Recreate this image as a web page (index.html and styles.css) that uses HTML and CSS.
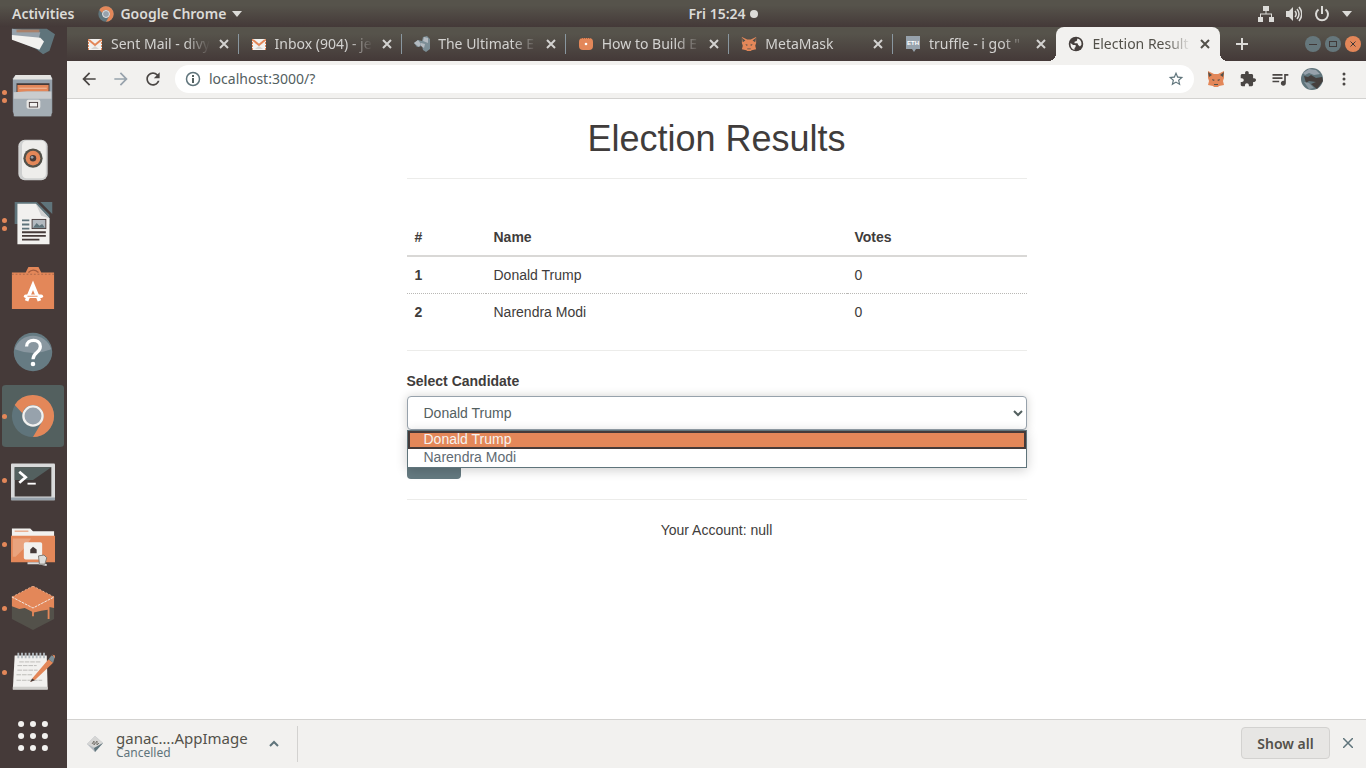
FILE: index.html
```html
<!DOCTYPE html>
<html lang="en">
<head>
<meta charset="utf-8">
<meta name="viewport" content="width=device-width, initial-scale=1">
<title>Election Results</title>
<link rel="stylesheet" href="styles.css">
</head>
<body>
<svg class="defs" width="0" height="0" aria-hidden="true">
  <symbol id="chrome" viewBox="0 0 48 48">
    <circle cx="24" cy="24" r="23" fill="#5f747b"/>
    <path d="M4 12A23 23 0 0 1 24 1a23 23 0 0 1 23 23 23 23 0 0 1-23 23l10-17a12 12 0 0 0-10-18c-6 0-10 4-11.500 9Z" fill="#e38759"/>
    <circle cx="24" cy="24" r="10.500" fill="#97a2ac" stroke="#f2f1ef" stroke-width="2.500"/>
  </symbol>
  <symbol id="gmail" viewBox="0 0 16 14">
    <path d="M1 2h14v11H1z" fill="#f2f1ef"/>
    <path d="M1.500 2v11M14.500 2v11" stroke="#e38759" stroke-dasharray="2 1"/>
    <path d="M2 3l6 5 6-5" fill="none" stroke="#e38759" stroke-width="2"/>
    <path d="M4 12l4-3 4 3z" fill="#d3d2d0"/>
  </symbol>
  <symbol id="close" viewBox="0 0 10 10">
    <path d="M1 1l8 8M9 1L1 9" fill="none" stroke="currentColor" stroke-width="2"/>
  </symbol>
  <symbol id="arrow" viewBox="0 0 24 24">
    <path d="M20 11H7.830l5.590-5.590L12 4l-8 8 8 8 1.410-1.410L7.830 13H20z" fill="currentColor"/>
  </symbol>
  <symbol id="fox" viewBox="0 0 18 16">
    <path d="M1 0l6 3h4l6-3v7l-1 3 1 4-5 1-1 1H7l-1-1-5-1 1-4-1-3z" fill="#e38759"/>
    <path d="M1 1l4 3-3 2zM17 1l-4 3 3 2zM5 8l3 1-2 1zM13 8l-3 1 2 1zM7 13h4v1H7z" fill="#53514a"/>
  </symbol>
</svg>

<header class="topbar">
  <div class="topbar-left">
    <button class="bar-btn" type="button">Activities</button>
    <button class="bar-btn app-menu" type="button">
      <svg class="i16" aria-hidden="true"><use href="#chrome"/></svg>
      <span>Google Chrome</span>
      <svg class="tri" viewBox="0 0 10 6" aria-hidden="true"><path d="M0 0h10L5 6z" fill="currentColor"/></svg>
    </button>
  </div>
  <button class="bar-btn clock" type="button">Fri 15:24 <span class="dot"></span></button>
  <div class="topbar-right">
    <svg class="i16" viewBox="0 0 16 16" aria-label="Network"><path d="M5 0h6v5H5zM0 11h5v5H0zM11 11h5v5h-5zM7.500 5h1v3h-1zM2 7.500h12v1H2zM2 8h1v3H2zM13 8h1v3h-1z" fill="currentColor"/></svg>
    <svg class="i16" viewBox="0 0 16 16" aria-label="Volume"><path d="M0 5h3l4-4v14l-4-4H0z" fill="currentColor"/><path d="M9 5q2.500 3 0 6M11 3q4 5 0 10M13 1q5.500 7 0 14" fill="none" stroke="currentColor" stroke-width="1.500"/></svg>
    <svg class="i16" viewBox="0 0 16 16" aria-label="Power"><path d="M4.500 3.500a6 6 0 1 0 7 0M8 0v8" fill="none" stroke="currentColor" stroke-width="2"/></svg>
    <svg class="tri" viewBox="0 0 10 6" aria-hidden="true"><path d="M0 0h10L5 6z" fill="currentColor"/></svg>
  </div>
</header>

<div class="desktop">
  <nav class="dock" aria-label="Dock">
    <button class="dock-item first" type="button" aria-label="Mail">
      <svg class="i48" viewBox="0 0 48 48" aria-hidden="true"><path d="M1 16h38l9 6-6 18-7 4-8-6L1 27z" fill="#5f747b"/><path d="M1 16l31 4-4 16L1 27z" fill="#97a2ac"/><path d="M1 23l31 3 4 4-5 9L1 28z" fill="#f2f1ef"/><path d="M6 17h25v3H6z" fill="#a9806a"/></svg>
    </button>
    <button class="dock-item" type="button" aria-label="Files">
      <span class="pips"><i></i><i></i></span>
      <svg class="i48" viewBox="0 0 48 48" aria-hidden="true"><path d="M5 1h38l2 4v37l-2 4H4L2 41V5z" fill="#97a2ac"/><path d="M5 1h38l2 5H2z" fill="#e4e3e1"/><path d="M6 10h36v11H6z" fill="#453a39"/><path d="M7 12h34v9H7z" fill="#e38759"/><path d="M9 15h30v1H9z" fill="#f2c5aa"/><path d="M3 20l15-1h26v27H3z" fill="#a4adb4"/><path d="M3 20l15-1h26v8H3z" fill="#c9ccce"/><rect x="17" y="28" width="15" height="10" rx="2" fill="#e7e6e4"/><rect x="20" y="31" width="9" height="5" fill="#f2f1ef" stroke="#453a39"/></svg>
    </button>
    <button class="dock-item" type="button" aria-label="Rhythmbox">
      <svg class="i48" viewBox="0 0 48 48" aria-hidden="true"><rect x="8" y="2" width="32" height="44" rx="7" fill="#cfd0d0"/><rect x="12" y="3" width="26" height="41" rx="5" fill="#eeedeb"/><circle cx="24" cy="22" r="10.500" fill="#53514a"/><circle cx="24" cy="22" r="8" fill="#e38759"/><circle cx="24" cy="22" r="3.500" fill="#453a39"/><circle cx="23" cy="21" r="1.500" fill="#97a2ac"/></svg>
    </button>
    <button class="dock-item" type="button" aria-label="LibreOffice Writer">
      <span class="pips"><i></i><i></i></span>
      <svg class="i48" viewBox="0 0 48 48" aria-hidden="true"><path d="M4 0h24l14 14v10H4z" fill="#5f747b"/><path d="M32 0h13v13z" fill="#5f747b"/><path d="M7 2h20l15 16v28H7z" fill="#f2f1ef"/><path d="M27 2l15 16-9-3z" fill="#d0d1d1"/><path d="M12 20h8M12 24.500h8M12 29h8" stroke="#5f747b" stroke-width="2"/><path d="M12 33h26M12 37h26M12 41h19" stroke="#453a39" stroke-width="2"/><rect x="23" y="19" width="15" height="10" fill="#b3bac0" stroke="#453a39"/><path d="M24 28l4-5 3 3 3-2 3 4z" fill="#5f747b"/></svg>
    </button>
    <button class="dock-item" type="button" aria-label="Ubuntu Software">
      <svg class="i48" viewBox="0 0 48 48" aria-hidden="true"><path d="M1 7h15l3-6h11l3 6h14v40H1z" fill="#e38759"/><path d="M19 7q5-5 11 0" fill="none" stroke="#a45c3e" stroke-width="1.500"/><path d="M1 9h46" stroke="#a66749" stroke-dasharray="2 2"/><path d="M17 38l7-17 7 17" fill="none" stroke="#fff" stroke-width="4"/><rect x="14" y="31" width="21" height="4" rx="2" fill="#fff"/><path d="M18 33h11" stroke="#e38759"/></svg>
    </button>
    <button class="dock-item" type="button" aria-label="Help">
      <svg class="i48" viewBox="0 0 48 48" aria-hidden="true"><circle cx="24" cy="24" r="21" fill="#667b83"/><path d="M4 21A21 21 0 0 1 44 21q-20 8-40 0z" fill="#8997a0"/><path d="M17 18c0-9 15-9 15 0 0 7-8 6-8 14" fill="none" stroke="#fff" stroke-width="3.500"/><circle cx="24" cy="37" r="2.500" fill="#fff"/></svg>
    </button>
    <button class="dock-item active" type="button" aria-label="Google Chrome">
      <span class="pips"><i></i></span>
      <svg class="i48" aria-hidden="true"><use href="#chrome"/></svg>
    </button>
    <button class="dock-item" type="button" aria-label="Terminal">
      <span class="pips"><i></i></span>
      <svg class="i48" viewBox="0 0 48 48" aria-hidden="true"><rect x="0" y="6" width="48" height="40" rx="1" fill="#d9dadb"/><path d="M0 43h48v3H0z" fill="#97a2ac"/><rect x="4" y="10" width="40" height="32" fill="#403938"/><path d="M4 10h40L24 24H4z" fill="#53605f"/><path d="M9 15l7 6-7 6" fill="none" stroke="#fff" stroke-width="3"/><path d="M18 28h9" stroke="#fff" stroke-width="2"/></svg>
    </button>
    <button class="dock-item" type="button" aria-label="Remote files">
      <span class="pips"><i></i></span>
      <svg class="i48" viewBox="0 0 48 48" aria-hidden="true"><path d="M1 7h20l3 3h23v6H1z" fill="#f2f1ef"/><path d="M4 10h15" stroke="#e38759"/><path d="M0 15h48v29H0z" fill="#e38759"/><path d="M2 18h20l-9 12-8 8H2z" fill="#e9a37e"/><rect x="14" y="22" width="20" height="19" rx="2" fill="#f2f1ef"/><path d="M21 34v-4l3-3 4 3v4z" fill="#453a39"/><path d="M18 45h12l9 2" fill="none" stroke="#d9dadb" stroke-width="2"/><path d="M30 37l6-1 3 3-2 7h-6z" fill="#dcdcda" stroke="#77746e"/></svg>
    </button>
    <button class="dock-item" type="button" aria-label="Ganache">
      <span class="pips"><i></i></span>
      <svg class="i48" viewBox="0 0 48 48" aria-hidden="true"><path d="M24 0l23 12v24L24 48 1 36V12z" fill="#53514a"/><path d="M24 0l23 12v12l-5-1v13h-2V26l-7 1-8 2v4h-2v-5l-8-4-6 1-8-3V12z" fill="#e38759"/><path d="M1 12l23 12 23-12" fill="none" stroke="#f2f1ef" stroke-dasharray="3 1"/><path d="M24 0L1 12M24 0l23 12" stroke="#eab193" stroke-dasharray="2 2"/></svg>
    </button>
    <button class="dock-item" type="button" aria-label="Text Editor">
      <span class="pips"><i></i></span>
      <svg class="i48" viewBox="0 0 48 48" aria-hidden="true"><path d="M4 6h35l1 37H2z" fill="#f2f1ef"/><path d="M2 40h38v3H2z" fill="#cfcecb"/><path d="M8 3v6M12 3v6M16 3v6M20 3v6M24 3v6M28 3v6M32 3v6M36 3v6" stroke="#b5bcc1" stroke-width="2"/><path d="M9 13h24M7 17h21M7 22h22M6 27h17M6 33h28" stroke="#b9b8b5" stroke-dasharray="5 1"/><path d="M24 30L41 10l5 4-19 18-6 3z" fill="#e38759"/><path d="M41 10l3-4 4 1-2 7z" fill="#7c8e96"/><path d="M45 5l3 1 0 3z" fill="#e38759"/><path d="M21 35l2-4 3 2z" fill="#453a39"/></svg>
    </button>
    <button class="dock-item" type="button" aria-label="Show applications">
      <svg class="i48" viewBox="0 0 48 48" aria-hidden="true"><g fill="#f2f1ef"><circle cx="11" cy="11" r="3.300"/><circle cx="24" cy="11" r="3.300"/><circle cx="37" cy="11" r="3.300"/><circle cx="11" cy="24" r="3.300"/><circle cx="24" cy="24" r="3.300"/><circle cx="37" cy="24" r="3.300"/><circle cx="11" cy="37" r="3.300"/><circle cx="24" cy="37" r="3.300"/><circle cx="37" cy="37" r="3.300"/></g></svg>
    </button>
  </nav>

  <div class="browser">
    <div class="tabstrip">
      <div class="tab">
        <svg class="i16" aria-hidden="true"><use href="#gmail"/></svg>
        <span class="tab-title">Sent Mail - divy</span>
        <button class="tab-close" type="button" aria-label="Close tab"><svg class="i10"><use href="#close"/></svg></button>
      </div>
      <div class="tab">
        <svg class="i16" aria-hidden="true"><use href="#gmail"/></svg>
        <span class="tab-title">Inbox (904) - je</span>
        <button class="tab-close" type="button" aria-label="Close tab"><svg class="i10"><use href="#close"/></svg></button>
      </div>
      <div class="tab">
        <svg class="i16" viewBox="0 0 16 16" aria-hidden="true"><path d="M0 7l4-3 4 1 1-4 4-1 3 3v10l-4 3-3-2-1-4-5 1z" fill="#7c8e96"/><path d="M0 7l4-3 3 4-2 3zM9 5l1-4 4 1v5zM7 7l4 1-1 4-3-2z" fill="#b3bac0"/></svg>
        <span class="tab-title">The Ultimate E</span>
        <button class="tab-close" type="button" aria-label="Close tab"><svg class="i10"><use href="#close"/></svg></button>
      </div>
      <div class="tab">
        <svg class="i16" viewBox="0 0 16 16" aria-hidden="true"><rect x="1" y="2" width="14" height="12" rx="4" fill="#e38759"/><path d="M3 2.500h10" stroke="#a8613f" stroke-dasharray="1 1"/><circle cx="8" cy="8" r="1.300" fill="#fff"/></svg>
        <span class="tab-title">How to Build E</span>
        <button class="tab-close" type="button" aria-label="Close tab"><svg class="i10"><use href="#close"/></svg></button>
      </div>
      <div class="tab">
        <svg class="i16" aria-hidden="true"><use href="#fox"/></svg>
        <span class="tab-title">MetaMask</span>
        <button class="tab-close" type="button" aria-label="Close tab"><svg class="i10"><use href="#close"/></svg></button>
      </div>
      <div class="tab">
        <svg class="i16" viewBox="0 0 16 16" aria-hidden="true"><path d="M1 0h14v13h-4l-2 3-2-3H1z" fill="#97a2ac"/><text class="eth" x="8" y="9" text-anchor="middle">ETH</text></svg>
        <span class="tab-title">truffle - i got "</span>
        <button class="tab-close" type="button" aria-label="Close tab"><svg class="i10"><use href="#close"/></svg></button>
      </div>
      <div class="tab current">
        <svg class="i16" viewBox="1 1 22 22" aria-hidden="true"><circle cx="12" cy="12" r="10" fill="#453f3d"/><path d="M4.500 10.500l3.500 3h3.500v2.500l-1.500 1.500v2.500c-4-1-6-5-5.500-9.500zM14 4.500c4 1 6 4.500 5.500 8.500l-2 2.500-2.500-2-1-2.500h-4V9l3-1z" fill="#f2f1ef"/></svg>
        <span class="tab-title">Election Result</span>
        <button class="tab-close" type="button" aria-label="Close tab"><svg class="i10"><use href="#close"/></svg></button>
      </div>
      <div class="strip-end">
        <button class="new-tab" type="button" aria-label="New tab"><svg class="i12" viewBox="0 0 12 12"><path d="M6 0v12M0 6h12" stroke="currentColor" stroke-width="2"/></svg></button>
        <div class="window-buttons">
          <button class="win" type="button" aria-label="Minimize"><svg class="i10" viewBox="0 0 10 10"><path d="M1 5.500h8" stroke="currentColor"/></svg></button>
          <button class="win" type="button" aria-label="Maximize"><svg class="i10" viewBox="0 0 10 10"><rect x="1.500" y="2.500" width="7" height="5" fill="none" stroke="currentColor"/></svg></button>
          <button class="win win-close" type="button" aria-label="Close"><svg class="i10" viewBox="0 0 10 10"><path d="M2.500 2.500l5 5M7.500 2.500l-5 5" stroke="currentColor"/></svg></button>
        </div>
      </div>
    </div>

    <div class="toolbar">
      <button class="tool" type="button" aria-label="Back"><svg class="i20"><use href="#arrow"/></svg></button>
      <button class="tool muted" type="button" aria-label="Forward"><svg class="i20 flip"><use href="#arrow"/></svg></button>
      <button class="tool" type="button" aria-label="Reload"><svg class="i20" viewBox="0 0 24 24"><path d="M17.650 6.350C16.200 4.900 14.210 4 12 4c-4.420 0-7.990 3.580-7.990 8s3.570 8 7.990 8c3.730 0 6.840-2.550 7.730-6h-2.080c-.820 2.330-3.040 4-5.650 4-3.310 0-6-2.690-6-6s2.690-6 6-6c1.660 0 3.140.690 4.220 1.780L13 11h7V4z" fill="currentColor"/></svg></button>
      <form class="omnibox">
        <svg class="i16" viewBox="0 0 16 16" aria-hidden="true"><circle cx="8" cy="8" r="6.500" fill="none" stroke="#5f747b" stroke-width="1.500"/><path d="M7 7h2v5H7zM7 4h2v2H7z" fill="#53605f"/></svg>
        <input class="url" type="text" value="localhost:3000/?" aria-label="Address">
        <button class="star" type="button" aria-label="Bookmark this page"><svg class="i16" viewBox="1 1 22 22"><path d="M22 9.240l-7.190-.620L12 2 9.190 8.630 2 9.240l5.460 4.730L5.820 21 12 17.270 18.180 21l-1.630-7.030zM12 15.400l-3.760 2.270 1-4.280-3.320-2.880 4.380-.380L12 6.100l1.710 4.040 4.380.380-3.320 2.880 1 4.280z" fill="currentColor"/></svg></button>
      </form>
      <button class="tool" type="button" aria-label="MetaMask"><svg class="i18"><use href="#fox"/></svg></button>
      <button class="tool" type="button" aria-label="Extensions"><svg class="i16" viewBox="1 1 22 22"><path d="M20.500 11H19V7c0-1.100-.900-2-2-2h-4V3.500C13 2.120 11.880 1 10.500 1S8 2.120 8 3.500V5H4c-1.100 0-1.990.900-1.990 2v3.800H3.500c1.490 0 2.700 1.210 2.700 2.700s-1.210 2.700-2.700 2.700H2V20c0 1.100.900 2 2 2h3.800v-1.500c0-1.490 1.210-2.700 2.700-2.700 1.490 0 2.700 1.210 2.700 2.700V22H17c1.100 0 2-.900 2-2v-4h1.500c1.380 0 2.500-1.120 2.500-2.500S21.880 11 20.500 11z" fill="currentColor"/></svg></button>
      <button class="tool" type="button" aria-label="Media controls"><svg class="i20" viewBox="0 0 24 24"><path d="M15 6H3v2h12V6zm0 4H3v2h12v-2zM3 16h8v-2H3v2zM17 6v8.180c-.310-.110-.650-.180-1-.180-1.660 0-3 1.340-3 3s1.340 3 3 3 3-1.340 3-3V8h3V6h-5z" fill="currentColor"/></svg></button>
      <button class="tool" type="button" aria-label="Profile"><svg class="i22" viewBox="0 0 22 22"><circle cx="11" cy="11" r="11" fill="#5f747b"/><path d="M2 5l6-4 7 1 4 4-6 1-5-2-4 2z" fill="#97a2ac"/><path d="M3 8l4 1 3-2 5 3 6-1 1 4-6 8-6-5 5-2-7-1-3 2z" fill="#453f3d"/><path d="M3 14l5 1 5 5-5 1z" fill="#8997a0"/></svg></button>
      <button class="tool" type="button" aria-label="Menu"><svg class="i20" viewBox="0 0 20 20"><g fill="currentColor"><circle cx="10" cy="5" r="1.500"/><circle cx="10" cy="10" r="1.500"/><circle cx="10" cy="15" r="1.500"/></g></svg></button>
    </div>

    <main class="page">
      <div class="container">
        <h1>Election Results</h1>
        <hr>
        <table class="results">
          <colgroup><col class="col-num"><col><col class="col-votes"></colgroup>
          <thead><tr><th scope="col">#</th><th scope="col">Name</th><th scope="col">Votes</th></tr></thead>
          <tbody>
            <tr><th scope="row">1</th><td>Donald Trump</td><td>0</td></tr>
            <tr><th scope="row">2</th><td>Narendra Modi</td><td>0</td></tr>
          </tbody>
        </table>
        <hr>
        <form>
          <div class="form-group">
            <label for="candidate">Select Candidate</label>
            <div class="select-wrap">
              <select id="candidate" class="form-control">
                <option selected>Donald Trump</option>
                <option>Narendra Modi</option>
              </select>
              <ul class="menu" role="listbox" aria-label="Candidates">
                <li class="menu-item selected" role="option" aria-selected="true">Donald Trump</li>
                <li class="menu-item" role="option" aria-selected="false">Narendra Modi</li>
              </ul>
            </div>
          </div>
          <button class="vote" type="submit" aria-label="Vote"></button>
        </form>
        <hr>
        <p class="account">Your Account: null</p>
      </div>
    </main>

    <footer class="downloads">
      <div class="download">
        <svg class="i16" viewBox="0 0 16 16" aria-hidden="true"><path d="M8 0l8 7-8 9-8-8z" fill="#b3bac0"/><path d="M8 0l8 7-8 5-8-4z" fill="#d6d6d5"/><path d="M16 7l-8 9-1-4z" fill="#5f747b"/><path d="M5 8l2-3v4l3-4v4l2-2" fill="none" stroke="#77746e"/></svg>
        <div class="download-text">
          <div class="file">ganac….AppImage</div>
          <div class="state">Cancelled</div>
        </div>
        <button class="more" type="button" aria-label="Download options"><svg class="i10" viewBox="0 0 10 10"><path d="M1 7l4-4 4 4" fill="none" stroke="currentColor" stroke-width="2"/></svg></button>
      </div>
      <div class="download-actions">
        <button class="show-all" type="button">Show all</button>
        <button class="shelf-close" type="button" aria-label="Close"><svg class="i10" viewBox="0 0 10 10"><path d="M0 0l10 10M10 0L0 10" stroke="currentColor" stroke-width="1.500"/></svg></button>
      </div>
    </footer>
  </div>
</div>
</body>
</html>
```
FILE: styles.css
```css
* { box-sizing: border-box; }

body {
  margin: 0;
  min-height: 100vh;
  display: flex;
  flex-direction: column;
  font-family: "Noto Sans", sans-serif;
  font-size: 14px;
  color: #453f3d;
  background: #fff;
}

button {
  margin: 0;
  padding: 0;
  border: 0;
  background: none;
  font: inherit;
  color: inherit;
}

svg { display: block; flex: none; }
.defs { position: absolute; }
.i10 { width: 10px; height: 10px; }
.i12 { width: 12px; height: 12px; }
.i16 { width: 16px; height: 16px; }
.i18 { width: 18px; height: 16px; }
.i20 { width: 20px; height: 20px; }
.i22 { width: 22px; height: 22px; }
.i48 { width: 44px; height: 44px; }
.flip { transform: scaleX(-1); }
.tri { width: 10px; height: 6px; }

/* Desktop top bar */
.topbar {
  display: grid;
  grid-template-columns: 1fr auto 1fr;
  align-items: center;
  height: 27px;
  background: linear-gradient(#56534b 20%, #443938);
  color: #dcdbd8;
}
.topbar-left { display: flex; align-items: center; gap: 24px; padding-left: 12px; }
.bar-btn { font-size: 14px; line-height: 20px; font-weight: 600; }
.app-menu { display: flex; align-items: center; gap: 6px; }
.clock { display: flex; align-items: center; gap: 4px; padding-left: 80px; }
.dot { width: 8px; height: 8px; border-radius: 50%; background: #dcdbd8; }
.topbar-right { display: flex; justify-content: flex-end; align-items: center; gap: 12px; padding-right: 14px; }

.desktop { flex: 1; display: flex; }

/* Dock */
.dock { width: 67px; flex: none; background: #453a39; }
.dock-item {
  position: relative;
  display: flex;
  align-items: center;
  justify-content: center;
  width: 62px;
  height: 64px;
  margin-left: 2px;
}
.dock-item.first { height: 37px; align-items: flex-end; overflow: hidden; padding-bottom: 6px; }
.dock-item.active { background: #53605f; background-clip: content-box; padding: 1px 0; border-radius: 4px; }
.pips { position: absolute; left: 0; top: 0; bottom: 0; display: flex; flex-direction: column; justify-content: center; gap: 3px; }
.pips i { width: 5px; height: 5px; border-radius: 50%; background: #e38759; }

/* Browser frame */
.browser { flex: 1; min-width: 0; display: flex; flex-direction: column; }
.tabstrip {
  display: flex;
  height: 34px;
  padding-left: 8px;
  background: linear-gradient(#56534b 20%, #443938);
  color: #d3d2d0;
}
.tab {
  position: relative;
  flex: 1;
  min-width: 0;
  display: flex;
  align-items: center;
  gap: 8px;
  padding: 0 9px 0 12px;
}
.tab:not(.current)::after {
  content: "";
  position: absolute;
  right: 0;
  top: 7px;
  width: 1px;
  height: 20px;
  background: #8997a0;
}
.tab:nth-last-child(3)::after { display: none; }
.tab-title {
  flex: 1;
  min-width: 0;
  overflow: hidden;
  white-space: nowrap;
  line-height: 20px;
  -webkit-mask-image: linear-gradient(90deg, #000 75%, transparent);
  mask-image: linear-gradient(90deg, #000 75%, transparent);
}
.tab-close { padding: 0 1px; }
.tab.current { background: #f2f1ef; color: #53514a; border-radius: 8px 8px 0 0; }
.tab.current::before,
.tab.current::after {
  content: "";
  position: absolute;
  bottom: 0;
  width: 8px;
  height: 8px;
}
.tab.current::before { left: -8px; background: radial-gradient(circle at 0 0, transparent 8px, #f2f1ef 8px); }
.tab.current::after { right: -8px; background: radial-gradient(circle at 100% 0, transparent 8px, #f2f1ef 8px); }
.eth { font: bold 6px "Liberation Sans", sans-serif; fill: #fff; }
.strip-end { flex: none; width: 146px; display: flex; align-items: center; justify-content: space-between; padding: 0 5px 0 16px; }
.new-tab { color: #dcdbd8; }
.window-buttons { display: flex; gap: 4px; }
.win {
  display: flex;
  align-items: center;
  justify-content: center;
  width: 16px;
  height: 16px;
  border-radius: 50%;
  background: #66777c;
  color: #403938;
}
.win-close { background: #e38759; }

.toolbar {
  display: flex;
  align-items: center;
  height: 38px;
  padding: 0 6px 1px;
  background: #f2f1ef;
  border-bottom: 1px solid #d3d2d0;
  color: #4a4644;
}
.tool { width: 32px; height: 28px; display: flex; align-items: center; justify-content: center; }
.muted { color: #97a2ac; }
.omnibox {
  flex: 1;
  min-width: 0;
  display: flex;
  align-items: center;
  gap: 8px;
  height: 28px;
  margin: 0 6px;
  padding: 0 10px;
  border-radius: 14px;
  background: #fff;
}
.url {
  flex: 1;
  min-width: 0;
  border: 0;
  padding: 0;
  outline: 0;
  background: none;
  font: 14px/20px "Noto Sans", sans-serif;
  color: #53605f;
}
.star { color: #5f747b; }

/* Page */
.page {
  flex: 1;
  font-family: "Liberation Sans", Arial, sans-serif;
  font-size: 14px;
  line-height: 20px;
  color: #403c3b;
}
.container { max-width: 650px; margin: 0 auto; padding: 0 15px; display: flow-root; }
h1 { margin: 20px 0 0; font-size: 36px; line-height: 39px; font-weight: 500; text-align: center; }
hr { margin: 20px 0; border: 0; border-top: 1px solid #ececea; }
.results { width: 100%; margin-top: 40px; border-collapse: collapse; table-layout: fixed; }
.col-num { width: 79px; }
.col-votes { width: 180px; }
.results th, .results td { padding: 8px; text-align: left; border-top: 1px dotted #b9b8b5; }
.results thead th { border-top: 0; border-bottom: 2px solid #d9d8d6; }
.form-group { margin-bottom: 15px; }
label { display: block; margin-bottom: 5px; font-weight: bold; }
.select-wrap { position: relative; }
.form-control {
  display: block;
  width: 100%;
  height: 34px;
  padding: 6px 12px;
  border: 1px solid #97a2ac;
  border-radius: 4px;
  background-color: #fff;
  box-shadow: 0 0 10px #d3d2d0;
  font: 14px/20px "Liberation Sans", Arial, sans-serif;
  color: #53605f;
}
.menu {
  position: absolute;
  top: 100%;
  left: 0;
  right: 0;
  margin: 0;
  padding: 0;
  list-style: none;
  background: #fff;
  border: 1px solid #5f747b;
  box-shadow: 0 2px 12px rgba(0, 0, 0, 0.2);
}
.menu-item { padding: 0 16px 2px; line-height: 16px; color: #5f6b73; }
.menu-item.selected { background: #e38759; color: #f6f3f0; box-shadow: inset 0 0 0 2px #453a39; }
.vote { display: block; width: 54px; height: 34px; border-radius: 4px; background: #657a81; }
.account { margin: 0; text-align: center; }

/* Download shelf */
.downloads {
  display: flex;
  align-items: center;
  justify-content: space-between;
  height: 49px;
  background: #f2f1ef;
  border-top: 1px solid #d3d2d0;
  color: #53514a;
}
.download {
  display: flex;
  align-items: center;
  width: 231px;
  height: 36px;
  padding: 0 18px 0 20px;
  gap: 13px;
  border-right: 1px solid #d3d2d0;
}
.download-text { flex: 1; white-space: nowrap; }
.file { font-size: 15px; line-height: 18px; padding-top: 2px; }
.state { font-size: 12px; line-height: 12px; padding-bottom: 2px; color: #5f747b; }
.more { color: #5f747b; }
.download-actions { display: flex; align-items: center; gap: 13px; padding: 0 13px 2px 0; color: #5f747b; }
.show-all {
  width: 89px;
  height: 32px;
  border: 1px solid #d3d2d0;
  border-radius: 4px;
  background: #e7e6e4;
  color: #53514a;
  font-weight: 600;
}
```
